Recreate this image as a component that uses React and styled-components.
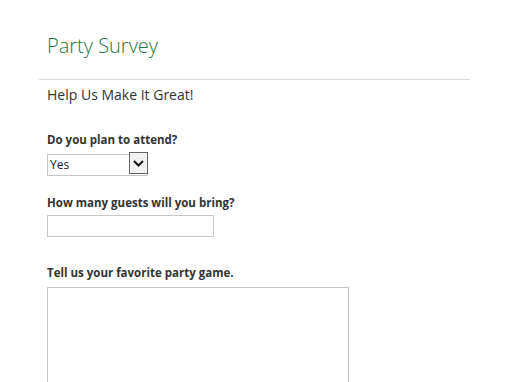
import React from "react"
import styled, { createGlobalStyle } from "styled-components"

const GlobalStyle = createGlobalStyle`
	html, body {
		margin: 0;
		padding: 0;
		background: #fff;
	}
	body {
		font-family: "Open Sans", "Noto Sans", sans-serif;
		color: #333;
	}
`

function App() {
	return (
		<>
			<GlobalStyle />
			<Page>
				<Header>
					<Title>Party Survey</Title>
				</Header>
				<Body>
					<Subtitle>Help Us Make It Great!</Subtitle>
					<Field $space={21}>
						<Label htmlFor="attend">Do you plan to attend?</Label>
						<SelectWrap>
							<Select id="attend" defaultValue="Yes">
								<option>Yes</option>
								<option>No</option>
								<option>Maybe</option>
							</Select>
							<Arrow>
								<svg width="11" height="7" viewBox="0 0 11 7">
									<path d="M1 1 L5.5 5.5 L10 1" fill="none" stroke="#111" strokeWidth="2" />
								</svg>
							</Arrow>
						</SelectWrap>
					</Field>
					<Field $space={28}>
						<Label htmlFor="guests">How many guests will you bring?</Label>
						<TextInput id="guests" type="text" />
					</Field>
					<Field $space={0} $labelGap={6}>
						<Label htmlFor="game">Tell us your favorite party game.</Label>
						<TextArea id="game" />
					</Field>
				</Body>
			</Page>
		</>
	)
}

export default App

const Page = styled.div`
	width: 431px;
	margin-left: 39px;
`
const Header = styled.div`
	padding: 30px 8px 17px;
	border-bottom: 1px solid #dcdcdc;
`
const Title = styled.h1`
	margin: 0;
	font-size: 20px;
	font-weight: 300;
	line-height: 32px;
	color: #267548;
`
const Body = styled.div`
	padding: 5px 8px 0;
`
const Subtitle = styled.h2`
	margin: 0 0 27px;
	font-size: 14px;
	font-weight: 400;
	line-height: 20px;
	color: #333;
`
const Field = styled.div`
	display: flex;
	flex-direction: column;
	align-items: flex-start;
	gap: ${p => p.$labelGap ?? 4}px;
	margin-bottom: ${p => p.$space}px;
`
const Label = styled.label`
	font-size: 11.5px;
	font-weight: 700;
	line-height: 16px;
	color: #333;
`
const SelectWrap = styled.div`
	position: relative;
	width: 101px;
	height: 22px;
`
const Select = styled.select`
	appearance: none;
	width: 100%;
	height: 100%;
	margin: 0;
	padding: 0 0 0 2px;
	border: 1px solid #c6c6c6;
	border-radius: 0;
	background: #fff;
	font-family: "Open Sans", sans-serif;
	font-size: 12px;
	color: #222;
	outline: none;
`
const Arrow = styled.span`
	position: absolute;
	top: 0;
	right: 0;
	width: 19px;
	height: 22px;
	box-sizing: border-box;
	border: 1px solid #666;
	background: #f2f2f2;
	display: flex;
	align-items: center;
	justify-content: center;
	pointer-events: none;
`
const TextInput = styled.input`
	width: 167px;
	height: 22px;
	box-sizing: border-box;
	margin: 0;
	border: 1px solid #c6c6c6;
	border-radius: 0;
	outline: none;
`
const TextArea = styled.textarea`
	width: 302px;
	height: 120px;
	box-sizing: border-box;
	margin: 0;
	border: 1px solid #c6c6c6;
	border-radius: 0;
	resize: none;
	outline: none;
`
